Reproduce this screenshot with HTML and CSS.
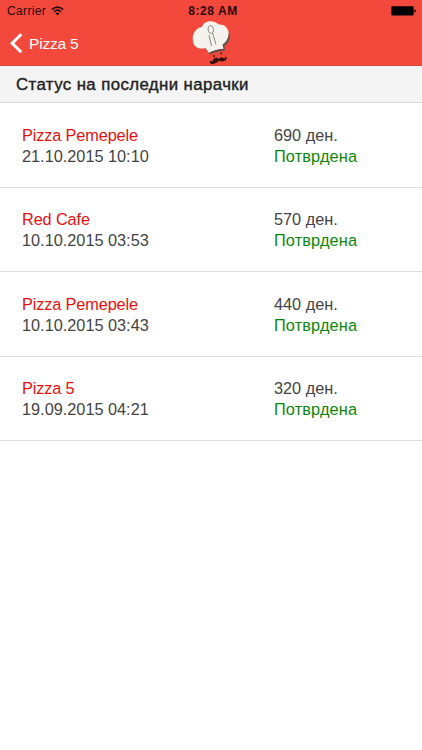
FILE: index.html
```html
<!DOCTYPE html>
<html lang="mk">
<head>
    <meta charset="UTF-8">
    <meta name="viewport" content="width=device-width, initial-scale=1.0">
    <title>Статус на последни нарачки</title>
    <link rel="stylesheet" href="styles.css">
</head>
<body>
    <header class="header">
        <div class="status-bar">
            <div class="carrier">
                <span>Carrier</span>
                <svg class="wifi" viewBox="0 0 13 10" width="13" height="10">
                    <path d="M0.8 3.6 Q6.5 -1.5 12.2 3.6" fill="none" stroke="#2b0b09" stroke-width="1.7"/>
                    <path d="M2.9 5.8 Q6.5 2.6 10.1 5.8" fill="none" stroke="#2b0b09" stroke-width="1.6"/>
                    <path d="M4.4 7.3 Q6.5 5.5 8.6 7.3 L6.5 9.5 Z" fill="#2b0b09"/>
                </svg>
            </div>
            <span class="time">8:28 AM</span>
            <svg class="battery" viewBox="0 0 26 10" width="26" height="10">
                <rect x="1.4" y="0.2" width="22.2" height="9.4" rx="0.8" fill="#000"/>
                <path d="M24.3 3.2 Q25.8 3.7 25.8 4.9 Q25.8 6.1 24.3 6.6 Z" fill="#000"/>
            </svg>
        </div>
        <nav class="nav">
            <a href="#" class="back-btn">
                <svg viewBox="0 0 13 21" width="13" height="21">
                    <path d="M11.3 1.3 L2.2 10.3 L11.3 19.3" fill="none" stroke="#fff" stroke-width="3"/>
                </svg>
                <span>Pizza 5</span>
            </a>
            <svg class="logo" viewBox="0 0 42 44" width="42" height="44">
                <!-- hat shadow -->
                <path d="M36 9 Q41 13 39.5 19 Q38 23 34.5 25 L35 30 Q27 30 20 33.5 L16 28 Q30 25 36 9 Z" fill="#74504c"/>
                <!-- hat -->
                <path d="M12 6 C13 2 18 -0.2 22 0.4 C25 0.6 27 2 29 3.6 C35 3 39 8 38.5 13 C38 19 35 22 32.5 23.5 L33.5 28 Q25 28.3 19 32 L15.5 27 C9 29 3.5 26 3 20 C2 15 4 11 6 9 C8 7 10 6 12 6 Z" fill="#f4f3ee"/>
                <!-- spoon -->
                <g fill="none" stroke="#807d79">
                    <ellipse cx="20.8" cy="8.5" rx="2.7" ry="4" transform="rotate(-10 20.8 8.5)" stroke-width="0.8"/>
                    <path d="M19 14 L21.5 25" stroke-width="0.9"/>
                    <path d="M22.6 12 L26 23.5" stroke-width="0.9"/>
                </g>
                <path d="M19 32.3 Q25 28.7 33.5 28.3" fill="none" stroke="#5f3935" stroke-width="0.8"/>
                <!-- mustache -->
                <g fill="#35100f">
                    <path d="M29 38 C26 35.6 23.5 37 23 39.2 C22.2 41.1 20.2 40.9 20.7 38.9 C18.6 41.3 20.4 43.2 23.3 42.9 C26.1 42.6 27.5 40.4 29.6 39.8 C31.8 41.2 34.7 40.6 36.2 38.6 C37.5 36.7 36.3 35.3 34.8 35.9 C36 37 34.6 38 33.3 36.9 C31.7 35.7 29.8 36.1 29 38 Z"/>
                    <circle cx="24" cy="35" r="0.9"/>
                    <circle cx="31.3" cy="32.5" r="0.9"/>
                </g>
            </svg>
        </nav>
    </header>

    <h1 class="title">Статус на последни нарачки</h1>

    <ul class="orders">
        <li class="order">
            <div class="info">
                <div class="name">Pizza Pemepele</div>
                <div>21.10.2015 10:10</div>
            </div>
            <div>
                <div>690 ден.</div>
                <div class="confirmed">Потврдена</div>
            </div>
        </li>
        <li class="order">
            <div class="info">
                <div class="name">Red Cafe</div>
                <div>10.10.2015 03:53</div>
            </div>
            <div>
                <div>570 ден.</div>
                <div class="confirmed">Потврдена</div>
            </div>
        </li>
        <li class="order">
            <div class="info">
                <div class="name">Pizza Pemepele</div>
                <div>10.10.2015 03:43</div>
            </div>
            <div>
                <div>440 ден.</div>
                <div class="confirmed">Потврдена</div>
            </div>
        </li>
        <li class="order">
            <div class="info">
                <div class="name">Pizza 5</div>
                <div>19.09.2015 04:21</div>
            </div>
            <div>
                <div>320 ден.</div>
                <div class="confirmed">Потврдена</div>
            </div>
        </li>
    </ul>
</body>
</html>
```

FILE: styles.css
```css
* {
    box-sizing: border-box;
}
body {
    margin: 0;
    min-height: 750px;
    background-color: #fff;
    color: #444;
    font-family: "Liberation Sans", Arial, sans-serif;
    font-size: 16.3px;
    line-height: 21px;
}
.header {
    height: 66px;
    background-color: #f2493c;
    border-bottom: 1px solid #d6433a;
}
.status-bar {
    display: grid;
    grid-template-columns: 1fr auto 1fr;
    align-items: center;
    height: 22px;
    padding: 0 6px 0 7px;
    color: #2b0b09;
    font-size: 12px;
}
.carrier {
    display: flex;
    align-items: center;
    gap: 5px;
    letter-spacing: 0.35px;
}
.time {
    padding-left: 3px;
    font-weight: bold;
    letter-spacing: 0.55px;
}
.battery {
    justify-self: end;
}
.nav {
    display: grid;
    grid-template-columns: 1fr auto 1fr;
    height: 43px;
    padding: 0 10px;
}
.back-btn {
    display: flex;
    align-items: center;
    gap: 6px;
    height: 42px;
    color: #fff;
    font-size: 15.5px;
    letter-spacing: -0.2px;
    text-decoration: none;
}
.logo {
    margin-top: -1px;
}
.title {
    height: 37px;
    margin: 0;
    padding-left: 16px;
    background-color: #f4f4f4;
    border-bottom: 1px solid #ddd;
    color: #222;
    font-size: 16.8px;
    font-weight: normal;
    letter-spacing: 0.42px;
    line-height: 37px;
    -webkit-text-stroke: 0.4px #222;
}
.orders {
    margin: 0;
    padding: 0;
    list-style: none;
}
.order {
    display: flex;
    height: 84.5px;
    padding: 21.5px 22px 0;
    border-bottom: 1px solid #ddd;
}
.info {
    width: 252px;
}
.name {
    color: #e60f0f;
    letter-spacing: -0.12px;
}
.confirmed {
    color: #0a870a;
    letter-spacing: 0.15px;
}
```
